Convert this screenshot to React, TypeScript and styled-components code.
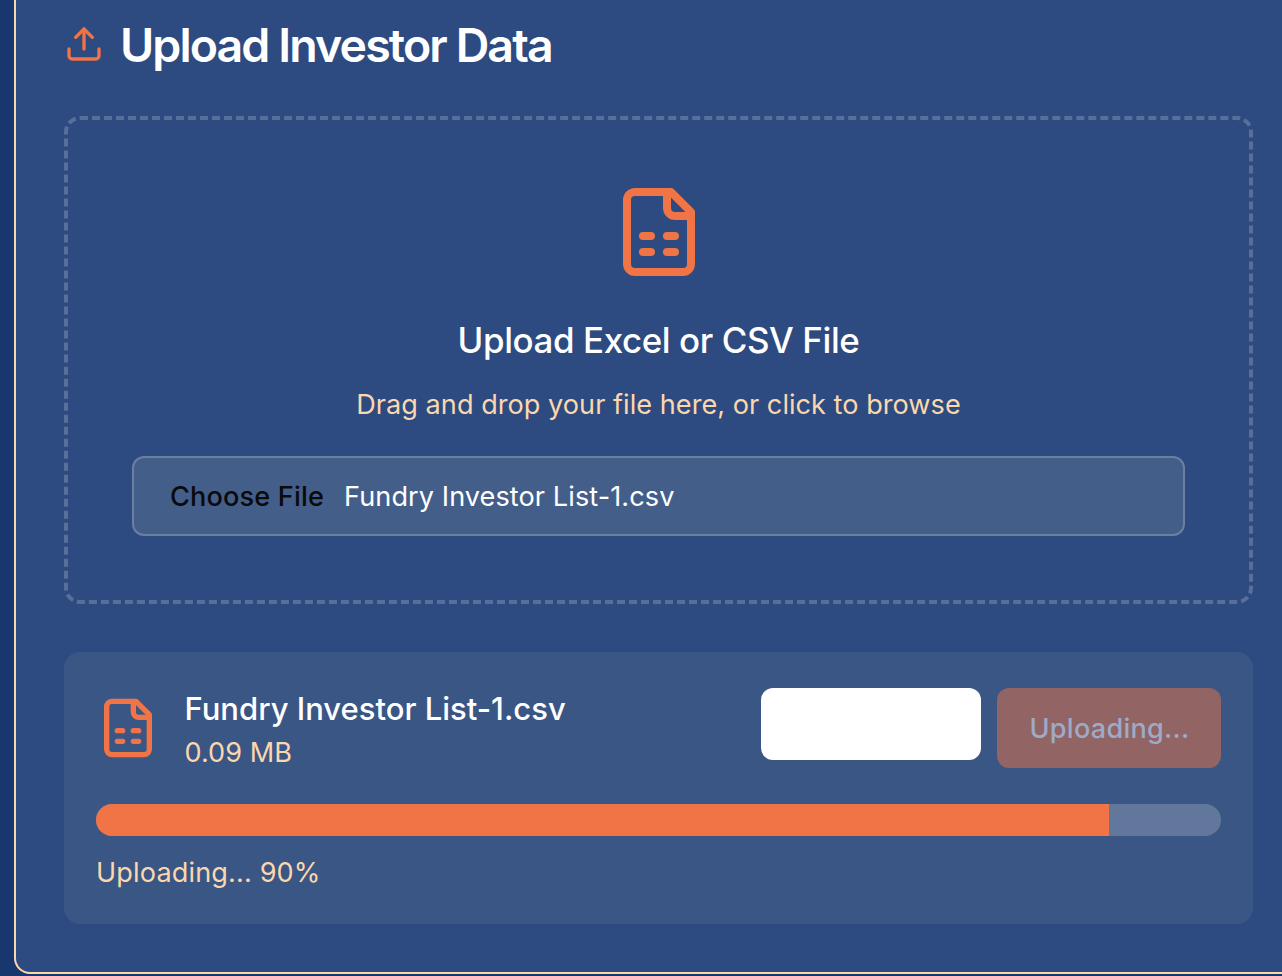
import React from "react";
import styled, { createGlobalStyle } from "styled-components";

const color = {
  page: "#18376e",
  panel: "#2d4b80",
  cream: "#fbd7ae",
  orange: "#f07445",
};

const GlobalStyle = createGlobalStyle`
  *, *::before, *::after { box-sizing: border-box; }
  body {
    margin: 0;
    background: ${color.page};
    font-family: Inter, "Liberation Sans", sans-serif;
    overflow: hidden;
  }
  h2, h3, p { margin: 0; font-weight: 400; white-space: nowrap; }
`;

const Page = styled.main`
  height: 976px;
  padding-left: 14px;
  overflow: hidden;
`;

const Panel = styled.section`
  width: 1289px;
  height: 974px;
  padding: 20px 0 0 48px;
  background: ${color.panel};
  border: 2px solid ${color.cream};
  border-top: 0;
  border-radius: 0 0 16px 16px;
`;

const Content = styled.div`
  width: 1189px;
  display: flex;
  flex-direction: column;
  gap: 48px;
`;

const Header = styled.header`
  display: flex;
  align-items: center;
  gap: 16px;
  height: 48px;
`;

const Title = styled.h2`
  padding-top: 2px;
  color: #fff;
  font-size: 46.5px;
  line-height: 48px;
  font-weight: 600;
  letter-spacing: -1.9px;
`;

const Icon = styled.svg<{ $size: number }>`
  display: block;
  flex: none;
  width: ${(p) => p.$size}px;
  height: ${(p) => p.$size}px;
  fill: none;
  stroke: ${color.orange};
  stroke-width: 2;
  stroke-linecap: round;
  stroke-linejoin: round;
`;

const DropZone = styled.div`
  display: flex;
  flex-direction: column;
  align-items: center;
  padding: 64px;
  border: 4px dashed rgba(255, 255, 255, 0.2);
  border-radius: 16px;
`;

const DropTitle = styled.h3`
  margin: 32px 0 16px;
  color: #fff;
  font-size: 34.9px;
  line-height: 56px;
  font-weight: 500;
  letter-spacing: -0.4px;
`;

const Note = styled.p<{ $spacing?: number }>`
  padding-top: 2px;
  color: ${color.cream};
  font-size: 27.1px;
  line-height: 38px;
  letter-spacing: ${(p) => p.$spacing ?? 0.03}px;
`;

const FileField = styled.div`
  display: flex;
  align-items: center;
  align-self: stretch;
  gap: 20px;
  height: 80px;
  margin-top: 32px;
  padding: 2px 36px 0;
  background: #445e8a;
  border: 2px solid #6a7fa2;
  border-radius: 12px;
  color: #fff;
  font-size: 27.1px;
  line-height: 40px;
  letter-spacing: 0.08px;
`;

const Choose = styled.span`
  color: #0a0a0a;
  font-weight: 500;
  letter-spacing: 0.17px;
`;

const Card = styled.div`
  padding: 32px;
  background: #3a5684;
  border-radius: 16px;
`;

const FileRow = styled.div`
  display: flex;
  align-items: center;
  height: 88px;
`;

const FileInfo = styled.div`
  flex: 1;
  margin-left: 24.5px;
`;

const FileName = styled.p`
  padding-top: 2px;
  color: #fff;
  font-size: 31px;
  line-height: 46px;
  font-weight: 500;
`;

const Actions = styled.div`
  display: flex;
  align-items: flex-start;
  gap: 16px;
`;

const Button = styled.button<{ $busy?: boolean }>`
  width: ${(p) => (p.$busy ? 224 : 220)}px;
  height: ${(p) => (p.$busy ? 80 : 72)}px;
  padding: 2px 0 0 1px;
  border: 0;
  border-radius: 12px;
  background: ${(p) => (p.$busy ? "#936464" : "#fff")};
  color: #9cabc8;
  font: 500 27.1px/40px Inter, "Liberation Sans", sans-serif;
  letter-spacing: 0.25px;
`;

const Track = styled.div`
  height: 32px;
  margin: 32px 0 16px;
  overflow: hidden;
  background: #61789c;
  border-radius: 16px;
`;

const Fill = styled.div`
  height: 100%;
  background: ${color.orange};
`;

const UploadIcon = () => (
  <Icon $size={40} viewBox="0 0 24 24">
    <path d="M21 15v4a2 2 0 0 1-2 2H5a2 2 0 0 1-2-2v-4" />
    <path d="m17 8-5-5-5 5" />
    <path d="M12 3v12" />
  </Icon>
);

const SheetIcon = ({ size }: { size: number }) => (
  <Icon $size={size} viewBox="0 0 24 24">
    <path d="M15 2H6a2 2 0 0 0-2 2v16a2 2 0 0 0 2 2h12a2 2 0 0 0 2-2V7Z" />
    <path d="M14 2v4a2 2 0 0 0 2 2h4" />
    <path d="M8 13h2M14 13h2M8 17h2M14 17h2" />
  </Icon>
);

export default function App() {
  const progress = 90;
  const fileName = "Fundry Investor List-1.csv";
  return (
    <Page>
      <GlobalStyle />
      <Panel>
        <Content>
          <Header>
            <UploadIcon />
            <Title>Upload Investor Data</Title>
          </Header>
          <DropZone>
            <SheetIcon size={96} />
            <DropTitle>Upload Excel or CSV File</DropTitle>
            <Note>Drag and drop your file here, or click to browse</Note>
            <FileField>
              <Choose>Choose File</Choose>
              <span>{fileName}</span>
            </FileField>
          </DropZone>
          <Card>
            <FileRow>
              <SheetIcon size={64} />
              <FileInfo>
                <FileName>{fileName}</FileName>
                <Note>0.09 MB</Note>
              </FileInfo>
              <Actions>
                <Button aria-label="Remove" />
                <Button $busy disabled>Uploading...</Button>
              </Actions>
            </FileRow>
            <Track>
              <Fill style={{ width: `${progress}%` }} />
            </Track>
            <Note $spacing={0.14}>Uploading... {progress}%</Note>
          </Card>
        </Content>
      </Panel>
    </Page>
  );
}
